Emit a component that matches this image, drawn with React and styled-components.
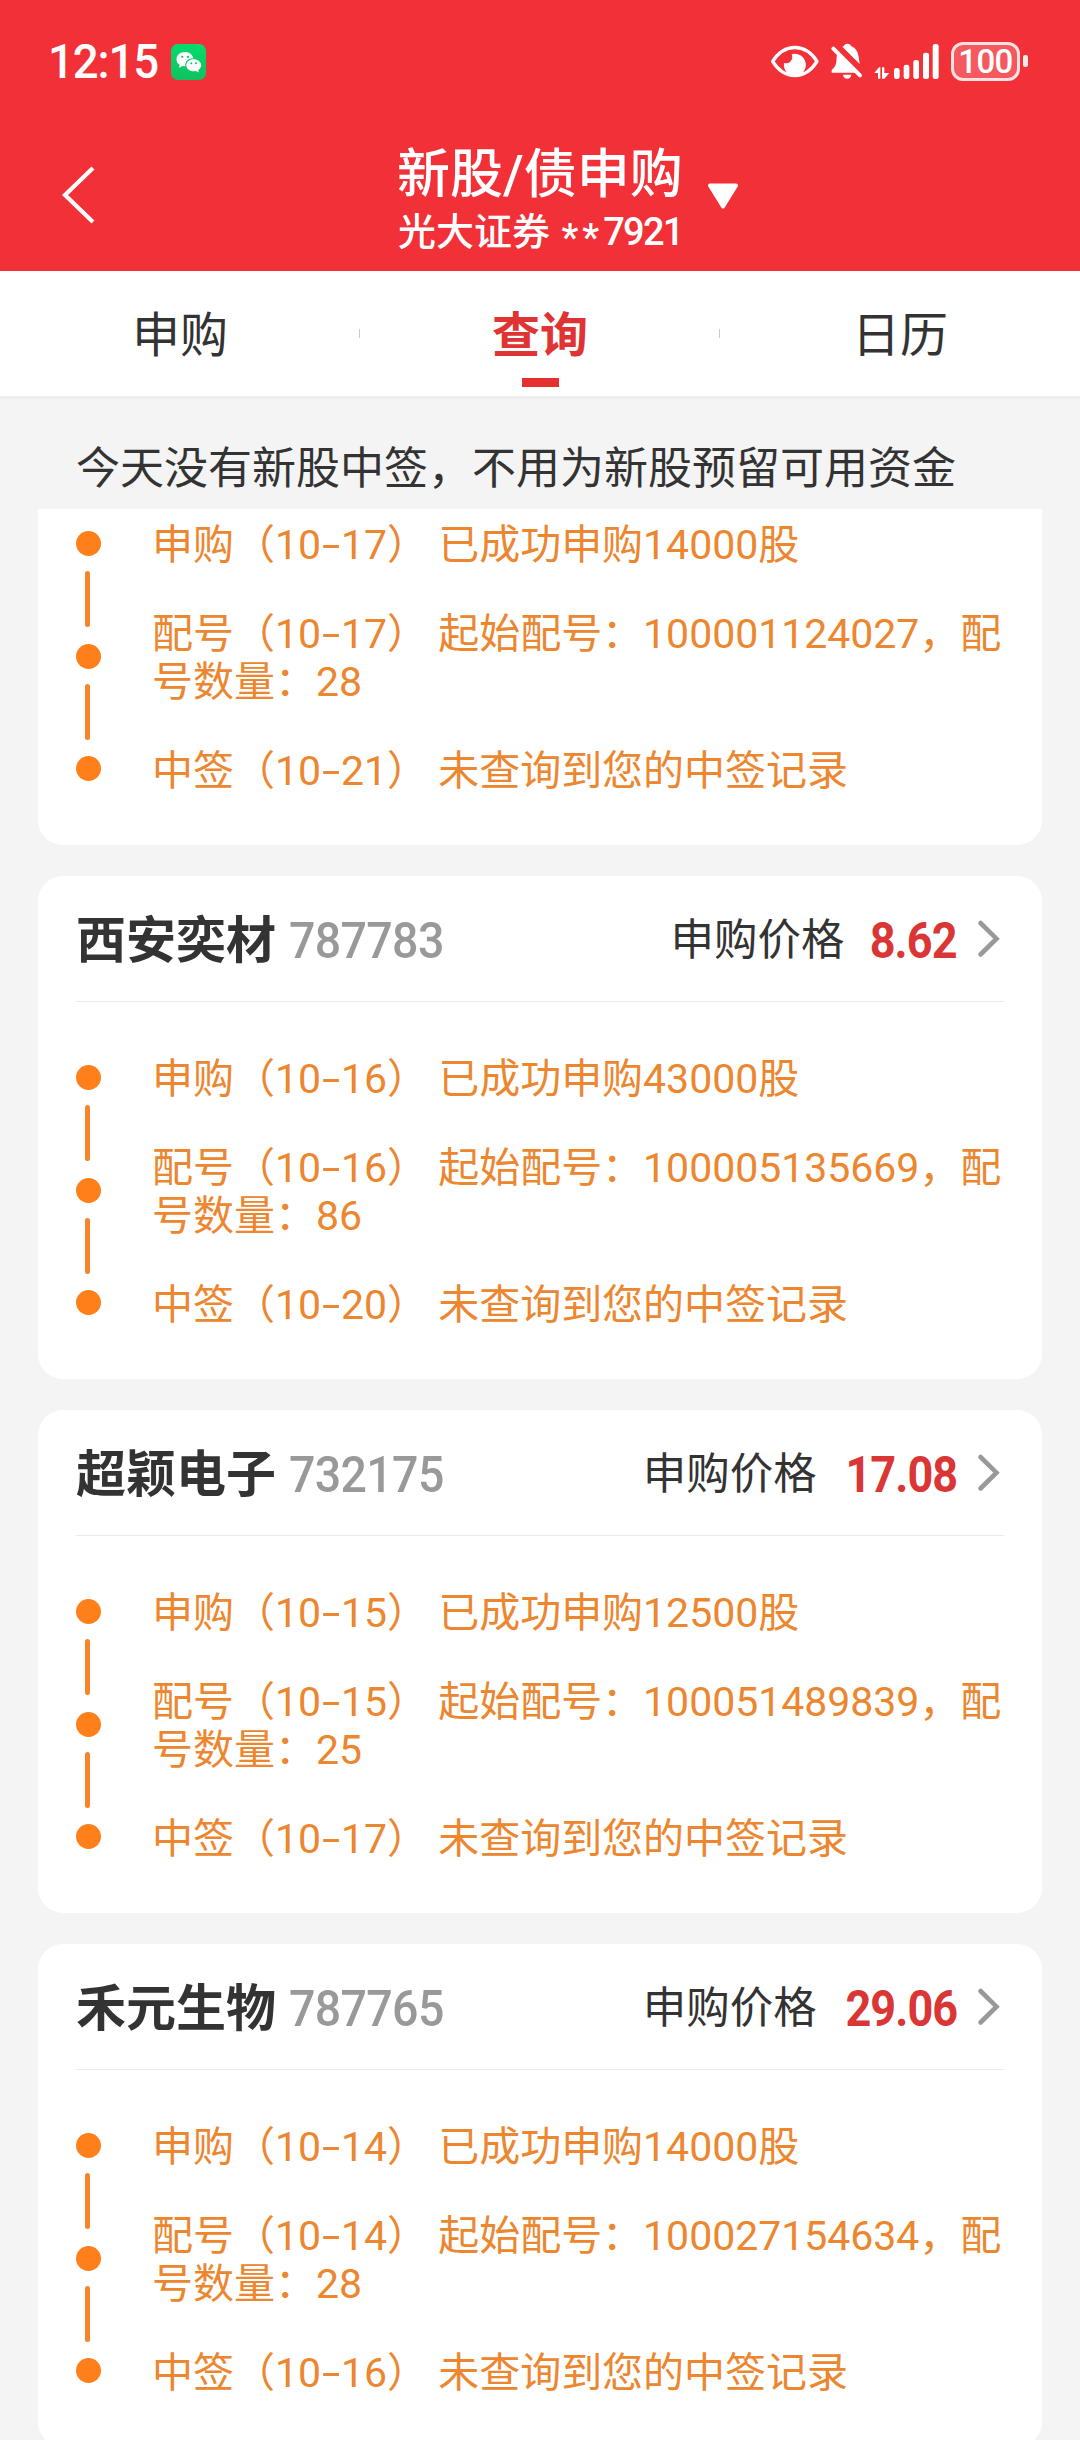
import React from "react";
import styled, { createGlobalStyle } from "styled-components";

const records = [
  {
    id: 1,
    applyDate: "10-17",
    shares: "14000",
    startNo: "100001124027",
    count: "28",
    drawDate: "10-21",
  },
  {
    id: 2,
    name: "西安奕材",
    code: "787783",
    price: "8.62",
    applyDate: "10-16",
    shares: "43000",
    startNo: "100005135669",
    count: "86",
    drawDate: "10-20",
  },
  {
    id: 3,
    name: "超颖电子",
    code: "732175",
    price: "17.08",
    applyDate: "10-15",
    shares: "12500",
    startNo: "100051489839",
    count: "25",
    drawDate: "10-17",
  },
  {
    id: 4,
    name: "禾元生物",
    code: "787765",
    price: "29.06",
    applyDate: "10-14",
    shares: "14000",
    startNo: "100027154634",
    count: "28",
    drawDate: "10-16",
  },
];

const tabs = ["申购", "查询", "日历"];

function StatusIcons() {
  return (
    <StatusRight>
      <svg width="50" height="38" viewBox="31 33 150 114" fill="none">
        <path
          d="M39 91 C55 66 78 49.500 105.500 49.500 C133 49.500 156 66 172 91 C156 117 133 133.500 105.500 133.500 C78 133.500 55 117 39 91 Z"
          stroke="#fff"
          strokeWidth="10"
          strokeLinejoin="round"
        />
        <path d="M96 70 A19 19 0 0 1 73 96 A33 33 0 1 0 96 70 Z" fill="#fff" />
      </svg>
      <svg width="34" height="38" viewBox="210 33 102 114" fill="#fff">
        <path d="M220 53 L300 133" stroke="#fff" strokeWidth="12" strokeLinecap="round" />
        <path d="M231 66 L290 125 L215 125 L215 117 Q228 106 229 92 Z" />
        <path d="M247 47 Q252 45 254 41 Q262 36 271 41 L273 45 Q294 54 296 78 L299 99 Z" />
        <path d="M249 131 H274 Q272 143 261.500 143 Q251 143 249 131 Z" />
      </svg>
      <svg width="68" height="38" viewBox="342 33 204 114" fill="#fff">
        <path d="M343 126 L357 109 H361 V143 H354 V126 Z" />
        <path d="M366 109 H373 V126 H388 L373 143 H366 Z" />
        <rect x="402" y="111" width="17" height="33" rx="7" />
        <rect x="431" y="101" width="17" height="43" rx="7" />
        <rect x="460" y="87" width="17" height="57" rx="7" />
        <rect x="489" y="65" width="18" height="79" rx="7" />
        <rect x="518" y="39" width="18" height="105" rx="7" />
      </svg>
      <Battery>100</Battery>
      <BatteryCap />
    </StatusRight>
  );
}

function WechatIcon() {
  return (
    <WechatBadge>
      <svg width="26" height="22" viewBox="0 0 26 22">
        <path
          fill="#fff"
          d="M9 1 C4.200 1 .5 4.200 .5 8.200 C.5 10.600 1.700 12.500 3.600 13.800 L3.200 16.900 L6.300 15 C7.200 15.200 8.200 15.400 9.400 15.300 C8.700 10.500 12.300 7.300 17.300 7.300 C16.700 3.600 13.200 1 9 1 Z"
        />
        <path
          fill="#fff"
          d="M17.600 8.300 C13.500 8.300 10.300 11 10.300 14.300 C10.300 17.700 13.500 20.300 17.600 20.300 C18.500 20.300 19.400 20.200 20.200 19.900 L22.700 21.400 L22.300 18.900 C24 17.800 25.200 16.200 25.200 14.300 C25.200 11 21.800 8.300 17.600 8.300 Z"
        />
        <circle cx="6.300" cy="5.800" r="1.100" fill="#07cc66" />
        <circle cx="12" cy="5.800" r="1.100" fill="#07cc66" />
        <circle cx="15.300" cy="12.200" r="1" fill="#07cc66" />
        <circle cx="20" cy="12.200" r="1" fill="#07cc66" />
      </svg>
    </WechatBadge>
  );
}

function StepDate({ value }) {
  const [month, day] = value.split("-");
  return (
    <>
      {`（${month}`}
      <Dash>-</Dash>
      {`${day}） `}
    </>
  );
}

function Timeline({ record, clipped }) {
  return (
    <TimelineRow $clipped={clipped}>
      <Track>
        <Dot />
        <Line />
        <Dot />
        <Line />
        <Dot />
      </Track>
      <Steps>
        <Step>
          申购
          <StepDate value={record.applyDate} />
          {`已成功申购${record.shares}股`}
        </Step>
        <Step>
          配号
          <StepDate value={record.applyDate} />
          {`起始配号：${record.startNo}，配号数量：${record.count}`}
        </Step>
        <Step>
          中签
          <StepDate value={record.drawDate} />
          未查询到您的中签记录
        </Step>
      </Steps>
    </TimelineRow>
  );
}

function RecordCard({ record }) {
  const clipped = !record.name;
  return (
    <Card $clipped={clipped}>
      {!clipped && (
        <CardHeader>
          <StockName>{record.name}</StockName>
          <StockCode>{record.code}</StockCode>
          <PriceLabel>申购价格</PriceLabel>
          <Price>{record.price}</Price>
          <svg width="28" height="40" viewBox="0 0 28 40" fill="none">
            <path d="M4.500 4 L20.500 19.700 L4.500 35.500" stroke="#999" strokeWidth="4.600" strokeLinecap="round" />
          </svg>
        </CardHeader>
      )}
      <Timeline record={record} clipped={clipped} />
    </Card>
  );
}

function App() {
  return (
    <Page>
      <GlobalStyle />
      <Top>
        <StatusBar>
          <Clock>12:15</Clock>
          <WechatIcon />
          <StatusIcons />
        </StatusBar>
        <NavBar>
          <Back>
            <svg width="36" height="60" viewBox="0 0 36 60" fill="none">
              <path d="M32 3 L4 30 L32 57" stroke="#fff" strokeWidth="4.200" />
            </svg>
          </Back>
          <Titles>
            <Title>新股/债申购</Title>
            <Account>
              光大证券 <Stars>**</Stars>
              <Tail>7921</Tail>
            </Account>
          </Titles>
          <svg width="32" height="28" viewBox="0 0 32 28">
            <path d="M3 2.500 H29 L16 23.500 Z" fill="#fff" stroke="#fff" strokeWidth="4" strokeLinejoin="round" />
          </svg>
        </NavBar>
      </Top>
      <Tabs>
        {tabs.map((tab) => (
          <Tab key={tab} $active={tab === "查询"}>
            {tab}
          </Tab>
        ))}
      </Tabs>
      <Notice>今天没有新股中签，不用为新股预留可用资金</Notice>
      <List>
        {records.map((record) => (
          <RecordCard key={record.id} record={record} />
        ))}
      </List>
    </Page>
  );
}

const GlobalStyle = createGlobalStyle`
  * {
    box-sizing: border-box;
  }
  body {
    margin: 0;
    background: #f4f4f4;
    font-family: Roboto, "Noto Sans CJK SC", sans-serif;
  }
  svg {
    display: block;
    flex: none;
  }
`;

const Page = styled.div`
  display: flex;
  flex-direction: column;
  width: 1080px;
  height: 2440px;
  overflow: hidden;
  background: #f4f4f4;
  color: #333;
`;

const Top = styled.header`
  flex: none;
  height: 271px;
  background: #f23037;
  color: #fff;
`;

const StatusBar = styled.div`
  display: flex;
  align-items: center;
  height: 123px;
  padding: 0 52px 0 48px;
`;

const Clock = styled.span`
  width: 123px;
  font-size: 48px;
  font-weight: 500;
  line-height: 60px;
  letter-spacing: -1.200px;
  transform: scaleX(0.95);
  transform-origin: left;
`;

const WechatBadge = styled.span`
  display: flex;
  align-items: center;
  justify-content: center;
  width: 35px;
  height: 36px;
  border-radius: 7px;
  background: linear-gradient(#04dc6c, #10c160);
`;

const StatusRight = styled.div`
  display: flex;
  align-items: center;
  margin-left: auto;
  padding-bottom: 1px;

  svg:nth-of-type(2) {
    margin: 0 10px;
  }
`;

const Battery = styled.span`
  width: 69px;
  height: 39px;
  margin-left: 9px;
  border: 3px solid #ffe1e2;
  border-radius: 12px;
  background: rgba(255, 255, 255, 0.2);
  font-size: 33px;
  font-weight: 500;
  line-height: 34px;
  letter-spacing: -0.600px;
  text-align: center;
`;

const BatteryCap = styled.span`
  width: 5px;
  height: 12px;
  margin-left: 3px;
  border-radius: 2px;
  background: #ffe9ea;
`;

const NavBar = styled.div`
  display: flex;
  align-items: center;
  height: 148px;
  padding-left: 61px;
`;

const Back = styled.div`
  width: 336px;
  padding-bottom: 4px;
`;

const Titles = styled.div`
  display: flex;
  flex-direction: column;
  width: 310px;
  padding-top: 11px;
`;

const Title = styled.h1`
  margin: 0;
  font-size: 53px;
  font-weight: 500;
  line-height: 60px;
  white-space: nowrap;
`;

const Account = styled.span`
  padding-left: 1px;
  font-size: 38px;
  font-weight: 500;
  line-height: 55px;
  white-space: nowrap;
`;

const Stars = styled.span`
  margin-left: 2px;
  letter-spacing: 4px;
  line-height: 1;
  vertical-align: -6px;
`;

const Tail = styled.span`
  letter-spacing: -1.700px;
`;

const Tabs = styled.nav`
  display: grid;
  grid-template-columns: repeat(3, 1fr);
  flex: none;
  height: 128px;
  border-bottom: 3px solid #ededed;
  background: #fff;
`;

const Tab = styled.div`
  position: relative;
  padding-top: 29px;
  color: ${(p) => (p.$active ? "#e03333" : "#333")};
  font-size: 48px;
  font-weight: ${(p) => (p.$active ? 700 : 400)};
  line-height: 72px;
  text-align: center;

  &:not(:last-child)::before {
    content: "";
    position: absolute;
    top: 58px;
    right: 0;
    width: 1px;
    height: 9px;
    background: #ccc;
  }

  &::after {
    content: "";
    display: ${(p) => (p.$active ? "block" : "none")};
    width: 37px;
    height: 9px;
    margin: 6px auto 0;
    background: #e53030;
  }
`;

const Notice = styled.div`
  flex: none;
  height: 110px;
  padding: 37px 76px 0;
  font-size: 44px;
  line-height: 66px;
  white-space: nowrap;
`;

const List = styled.main`
  display: flex;
  flex-direction: column;
  gap: 31px;
  padding: 0 38px;
`;

const Card = styled.section`
  flex: none;
  height: ${(p) => (p.$clipped ? 336 : 503)}px;
  padding: 0 38px;
  border-radius: ${(p) => (p.$clipped ? "0 0 25px 25px" : "25px")};
  background: #fff;
`;

const CardHeader = styled.div`
  display: flex;
  align-items: center;
  height: 126px;
  border-bottom: 1px solid #ebebeb;
`;

const StockName = styled.span`
  padding-top: 5px;
  font-size: 50px;
  font-weight: 700;
  line-height: 60px;
`;

const StockCode = styled.span`
  margin-left: 13px;
  padding-top: 5px;
  color: #999;
  font-size: 50px;
  font-weight: 500;
  line-height: 60px;
  letter-spacing: -0.700px;
  transform: scaleX(0.93);
  transform-origin: left;
`;

const PriceLabel = styled.span`
  margin-left: auto;
  padding-top: 5px;
  font-size: 43.500px;
  line-height: 60px;
`;

const Price = styled.span`
  margin: 0 19px 0 16px;
  padding-top: 5px;
  color: #da3636;
  font-size: 50px;
  font-weight: 700;
  line-height: 60px;
  letter-spacing: -1px;
  transform: scaleX(0.9);
  transform-origin: right;
`;

const TimelineRow = styled.div`
  display: flex;
  align-items: flex-start;
  padding-top: ${(p) => (p.$clipped ? 10 : 51)}px;
`;

const Track = styled.div`
  display: flex;
  flex-direction: column;
  width: 76px;
  padding-top: 12px;
`;

const Dot = styled.span`
  width: 25px;
  height: 25px;
  border-radius: 50%;
  background: #ff7f1b;
`;

const Line = styled.span`
  width: 5px;
  height: 56px;
  margin: 15px 0 16.500px 9px;
  border-radius: 3px;
  background: #f5842b;
`;

const Steps = styled.div`
  display: flex;
  flex-direction: column;
  flex: 1;
  gap: 41px;
  padding-top: 2px;
`;

const Step = styled.div`
  color: #ec862f;
  font-size: 41px;
  line-height: 48px;
  letter-spacing: -0.020px;
`;

const Dash = styled.span`
  display: inline-block;
  width: 20px;
  text-align: center;
  transform: scaleX(1.600);
`;

export default App;
